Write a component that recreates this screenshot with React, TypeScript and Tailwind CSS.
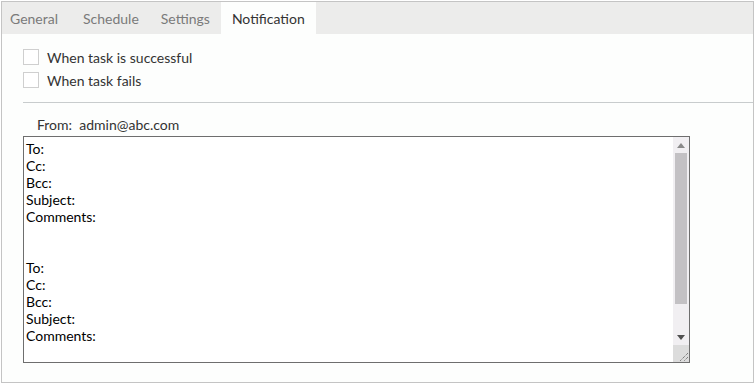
export default function App() {
  const tabs = ["General", "Schedule", "Settings", "Notification"]
  const lines = ["To:", "Cc:", "Bcc:", "Subject:", "Comments:", "", "", "To:", "Cc:", "Bcc:", "Subject:", "Comments:"]

  return (
    <div className="w-[755px] h-[384px] bg-white p-px font-['Lato','Liberation_Sans',sans-serif]">
      <div className="h-[382px] w-[753px] border border-[#c4c4c4] bg-[#fdfefd] flex flex-col">
        {/* tab bar */}
        <div className="flex h-[32px] bg-[#ececeb] shrink-0">
          {tabs.map((t, i) => (
            <div
              key={t}
              className={
                t === "Notification"
                  ? "px-[11px] flex items-center text-[14px] text-[#333] bg-[#fdfefd]"
                  : i === 0
                  ? "pl-[8px] pr-[14px] flex items-center text-[14px] text-[#7a7a7a]"
                  : "px-[11px] flex items-center text-[14px] text-[#7a7a7a]"
              }
            >
              {t}
            </div>
          ))}
        </div>

        <div className="pl-[21px] pt-[15px] flex flex-col">
          <label className="flex items-center gap-[8px] h-[16px] text-[14px] text-[#333]">
            <span className="w-[16px] h-[16px] border border-[#cfcfcf] bg-white" />
            When task is successful
          </label>
          <label className="flex items-center gap-[8px] h-[16px] mt-[7px] text-[14px] text-[#333]">
            <span className="w-[16px] h-[16px] border border-[#cfcfcf] bg-white" />
            When task fails
          </label>

          <div className="mt-[14px] h-px bg-[#c8cccd]" />

          <div className="mt-[13px] pl-[14px] text-[14px] text-[#333] leading-[17px]">From:&nbsp; admin@abc.com</div>

          <div className="mt-[3px] w-[667px] h-[227px] border border-[#6e6e6e] bg-white flex">
            <div className="flex-1 pl-[2px] pt-[3px] text-[14px] leading-[17px] text-black overflow-hidden">
              {lines.map((l, i) => (
                <div key={i} className="h-[17px]">{l}</div>
              ))}
            </div>
            <div className="w-[16px] bg-[#f1eff2] flex flex-col">
              <div className="h-[16px] flex items-center justify-center">
                <svg width="8" height="5" viewBox="0 0 8 5">
                  <path d="M0 5 L4 0 L8 5 Z" fill="#8a8a8a" />
                </svg>
              </div>
              <div className="mx-[2px] h-[151px] bg-[#c3c1c4]" />
              <div className="flex-1 flex items-end justify-center pb-[5px]">
                <svg width="8" height="5" viewBox="0 0 8 5">
                  <path d="M0 0 L8 0 L4 5 Z" fill="#505050" />
                </svg>
              </div>
              <div className="h-[17px] bg-[#dcdcdc] flex items-end justify-end">
                <svg width="12" height="12" viewBox="0 0 12 12">
                  <path d="M11 3 L3 11 M11 7 L7 11" stroke="#555" strokeWidth="1" strokeDasharray="1 1" />
                </svg>
              </div>
            </div>
          </div>
        </div>
      </div>
    </div>
  )
}
